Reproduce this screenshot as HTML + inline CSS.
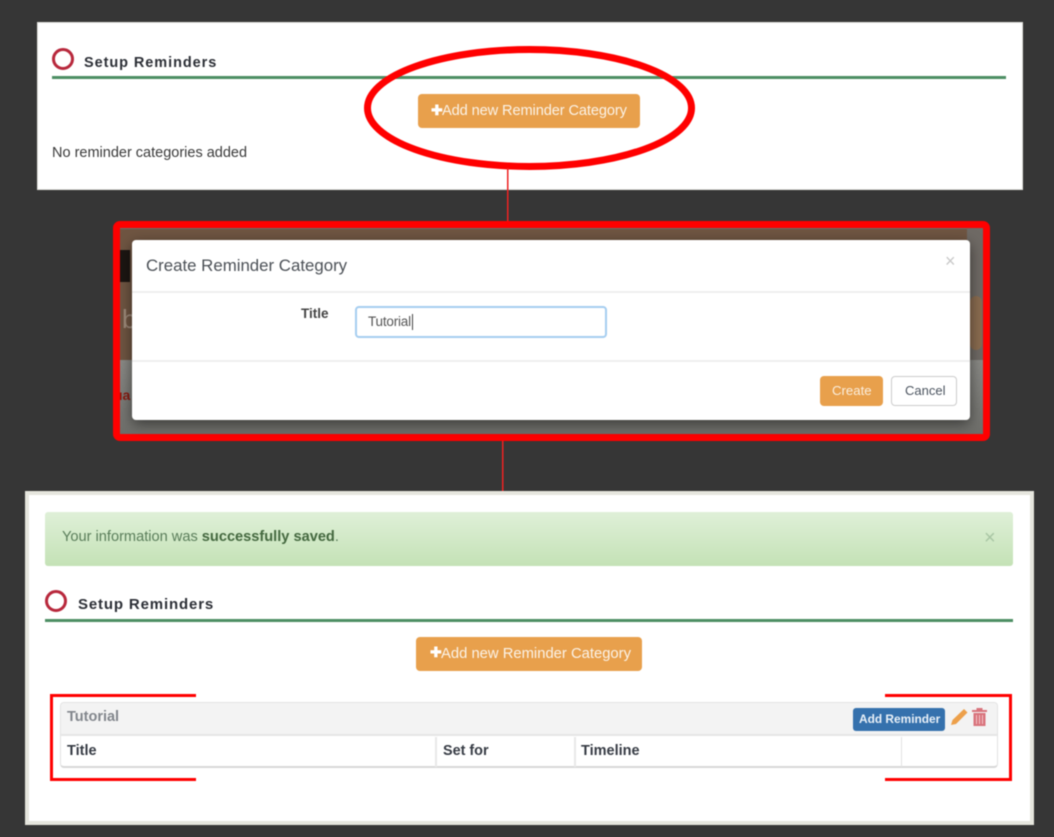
<!DOCTYPE html>
<html><head><meta charset="utf-8"><style>
html,body{margin:0;padding:0;width:1054px;height:837px;overflow:hidden;background:#363636;font-family:"Liberation Sans",sans-serif;color:#333}
div,span,svg{position:absolute;box-sizing:border-box}
span{white-space:nowrap;line-height:1}
b{font-weight:bold}
#w{left:0;top:0;width:1054px;height:837px;filter:blur(.45px)}
.btn{background:#e8a04c;border-radius:4px;color:#fff;text-align:center}
.ring{border:3px solid #b8283c;border-radius:50%;width:22px;height:22px;background:#fff}
.green{background:#4d8f64;height:3px}
</style></head><body><div id="w">
<div style="left:37px;top:22px;width:986px;height:168px;background:#fff;border:1px solid #e2e2de"></div>
<div class="ring" style="left:52px;top:48px"></div>
<span style="left:84px;top:56px;font-size:14.5px;font-weight:bold;letter-spacing:.93px;color:#2c2f36">Setup Reminders</span>
<div class="green" style="left:52px;top:76px;width:954px"></div>
<div class="btn" style="left:418px;top:94px;width:222px;height:34px"></div>
<span style="left:431px;top:103px;font-size:14px;color:#fff"><b>✚</b></span>
<span style="left:442px;top:104px;font-size:14.6px;color:#fbf3e8;letter-spacing:-.1px">Add new Reminder Category</span>
<span style="left:52px;top:146px;font-size:14.5px;color:#3a3a3a">No reminder categories added</span>
<svg style="left:0;top:0" width="1054" height="837"><ellipse cx="529.500" cy="108" rx="162" ry="58.500" fill="none" stroke="#f00" stroke-width="7"/><rect x="507" y="168" width="1.500" height="54" fill="#e22"/><rect x="502" y="438" width="1.500" height="54" fill="#e22"/></svg>

<div style="left:113px;top:221px;width:877px;height:220px;background:#6e6e6a;border:7px solid #f00;border-radius:7px;overflow:hidden">
<div style="left:0;top:1px;width:850px;height:131px;background:#6f5542"></div>
<div style="left:847px;top:0;width:23px;height:132px;background:#6f6a65"></div>
<div style="left:850px;top:68px;width:12px;height:54px;background:#8a6c50;border-radius:6px"></div>
<div style="left:0;top:132px;width:870px;height:74px;background:linear-gradient(#8a8a86,#6e6e6a)"></div>
<div style="left:0;top:22px;width:10px;height:32px;background:#1c1612"></div>
<span style="left:2px;top:78px;font-size:26px;color:#a08c7c">b</span>
<span style="left:-6px;top:160px;font-size:14px;font-weight:bold;color:#8a1a10">ua</span>
</div>
<div style="left:132px;top:240px;width:838px;height:180px;background:#fff;border-radius:4px;box-shadow:0 4px 14px rgba(0,0,0,.5)"></div>
<span style="left:146px;top:258px;font-size:16.830px;color:#4c5157">Create Reminder Category</span>
<span style="left:945px;top:252px;font-size:18px;color:#c8c8c8">×</span>
<div style="left:132px;top:291px;width:838px;height:2px;background:#eee"></div>
<span style="left:301px;top:307px;font-size:13.500px;font-weight:bold;color:#444">Title</span>
<div style="left:355px;top:306px;width:252px;height:32px;background:#fff;border:2px solid #a5cdf0;border-radius:4px"></div>
<span style="left:368px;top:315px;font-size:13.500px;color:#555;letter-spacing:-.2px">Tutorial</span>
<div style="left:412px;top:314px;width:1px;height:16px;background:#444"></div>
<div style="left:132px;top:360px;width:838px;height:2px;background:#eee"></div>
<div class="btn" style="left:820px;top:376px;width:63px;height:30px"></div>
<span style="left:832px;top:384px;font-size:13.200px;color:#fbeedd">Create</span>
<div style="left:891px;top:376px;width:66px;height:30px;background:#fff;border:1px solid #ccc;border-radius:4px"></div>
<span style="left:905px;top:384px;font-size:13px;color:#4c5560">Cancel</span>

<div style="left:25px;top:491px;width:1009px;height:334px;background:#fff;border:4px solid #e6e6de"></div>
<div style="left:45px;top:512px;width:968px;height:54px;background:linear-gradient(#dff0d8,#c4e2b6);border-radius:3px"></div>
<span style="left:62px;top:530px;font-size:14.600px;color:#5a7d5a">Your information was <b style="color:#44683f">successfully saved</b>.</span>
<span style="left:984px;top:528px;font-size:20px;color:#a9c6a4">×</span>
<div class="ring" style="left:45px;top:590px"></div>
<span style="left:78px;top:597px;font-size:15px;font-weight:bold;letter-spacing:.85px;color:#2c2f36">Setup Reminders</span>
<div class="green" style="left:45px;top:619px;width:968px"></div>
<div class="btn" style="left:416px;top:637px;width:226px;height:34px"></div>
<span style="left:430px;top:645px;font-size:14px;color:#fff"><b>✚</b></span>
<span style="left:441px;top:647px;font-size:14.800px;color:#fbf3e8">Add new Reminder Category</span>

<div style="left:60px;top:702px;width:938px;height:66px;background:#fff;border:1px solid #e2e2e2;border-bottom:2px solid #d8d8d8;border-radius:4px"></div>
<div style="left:61px;top:703px;width:936px;height:33px;background:#f3f3f3;border-bottom:2px solid #e6e6e6;border-radius:3px 3px 0 0"></div>
<span style="left:67px;top:710px;font-size:14.500px;font-weight:bold;color:#82868c">Tutorial</span>
<div style="left:853px;top:708px;width:92px;height:23px;background:#3571ad;border-radius:3px"></div>
<span style="left:859px;top:714px;font-size:11.900px;font-weight:bold;color:#eaf1f8">Add Reminder</span>
<svg style="left:950px;top:707px" width="38" height="20" viewBox="0 0 38 20"><path d="M1 18l1.500-5L14 2l3.500 3.500L6 17z" fill="#eda04a"/><path d="M23.500 6h12v13h-12z" fill="#d9737c"/><path d="M22 3h15v2H22zM26.500 1h6v2h-6z" fill="#d9737c"/><path d="M26.500 8v9M29.500 8v9M32.500 8v9" stroke="#f3c6c9" stroke-width="1"/></svg>
<span style="left:67px;top:744px;font-size:14.500px;font-weight:bold;color:#363b44">Title</span>
<span style="left:443px;top:744px;font-size:14.400px;font-weight:bold;color:#363b44">Set for</span>
<span style="left:581px;top:744px;font-size:14.500px;font-weight:bold;color:#363b44">Timeline</span>
<div style="left:435px;top:737px;width:2px;height:30px;background:#e8e8e8"></div>
<div style="left:574px;top:737px;width:2px;height:30px;background:#e8e8e8"></div>
<div style="left:901px;top:737px;width:1px;height:30px;background:#e2e2e2"></div>

<div style="left:50px;top:694px;width:146px;height:87px;border:3px solid #f00;border-right:0"></div>
<div style="left:885px;top:694px;width:127px;height:87px;border:3px solid #f00;border-left:0"></div>
</div></body></html>
